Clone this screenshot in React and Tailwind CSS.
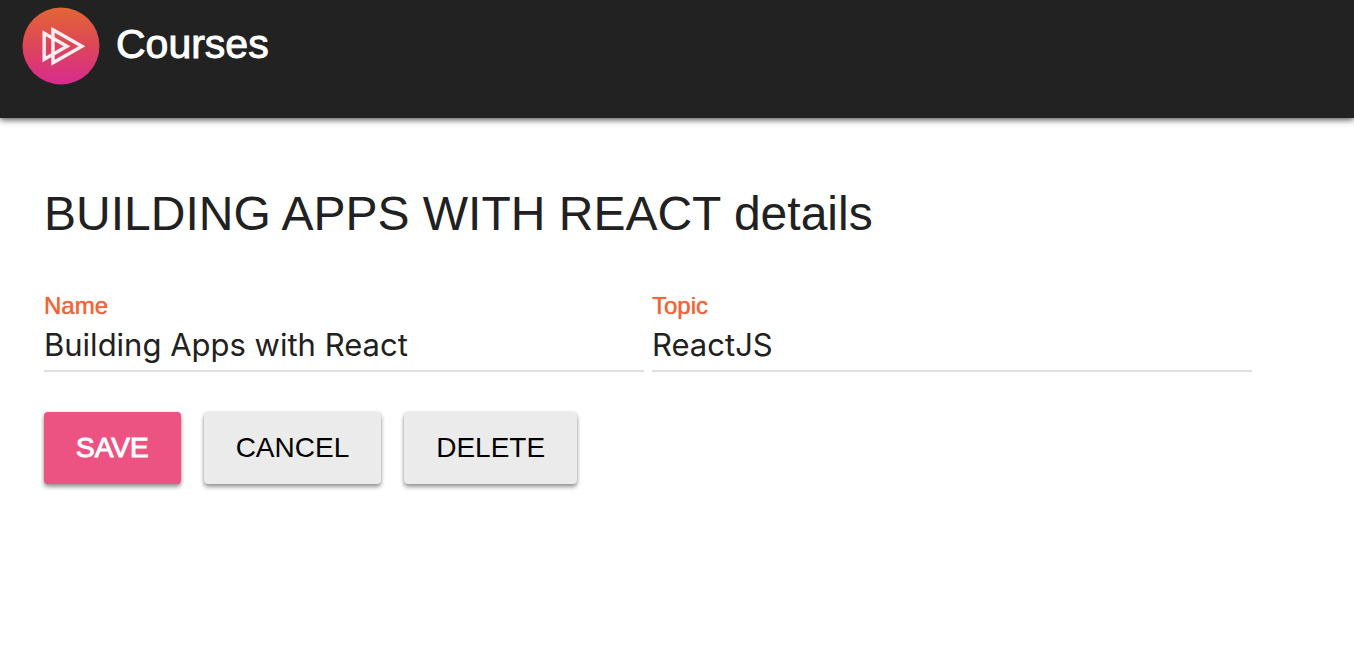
import React from 'react';

function Logo() {
  return (
    <svg viewBox="0 0 78 78" className="size-[78px] shrink-0" aria-hidden="true">
      <defs>
        <linearGradient id="logo-fill" x1="0" y1="0" x2="0" y2="1">
          <stop offset="0" stopColor="#e36635" />
          <stop offset="0.5" stopColor="#dd4558" />
          <stop offset="1" stopColor="#d82b90" />
        </linearGradient>
      </defs>
      <circle cx="39" cy="39" r="38.5" fill="url(#logo-fill)" />
      <g fill="none" stroke="#fdeef2" strokeWidth="3.4">
        <path d="M31 22.8 L60 39.3 L31 55.8 Z" />
        <path d="M22.2 26.3 L45 39.3 L22.2 52.3 Z" />
      </g>
    </svg>
  );
}

function Field({ id, label, value }) {
  return (
    <div className="w-[600px] min-w-0">
      <label htmlFor={id} className="block text-2xl leading-7 text-[#f0643a] [text-shadow:0_0_1px_#f0643a]">
        {label}
      </label>
      <input
        id={id}
        type="text"
        defaultValue={value}
        className="block h-[52px] w-full border-b-2 border-[#e0e0e0] bg-transparent pb-[2px] font-['Inter',sans-serif] text-[31px] leading-10 text-[#212121] outline-none"
      />
    </div>
  );
}

const buttonBase =
  'h-[72px] rounded px-8 text-[28px] leading-9 shadow-[0_3px_4px_rgba(0,0,0,0.4),0_0_3px_rgba(0,0,0,0.12)]';

export default function App() {
  return (
    <div className="font-['Liberation_Sans',sans-serif] text-[#212121]">
      <header className="flex h-[118px] items-start gap-4 bg-[#222222] px-[22px] pt-[7px] text-white shadow-[0_2px_6px_rgba(0,0,0,0.65)]">
        <Logo />
        <span className="pt-[13px] text-[41px] leading-12 [-webkit-text-stroke:1px]">Courses</span>
      </header>
      <main className="px-11 pt-16 pb-10">
        <h1 className="text-5xl leading-16">BUILDING APPS WITH REACT details</h1>
        <form className="pt-[46px]" onSubmit={(e) => e.preventDefault()}>
          <div className="flex gap-2">
            <Field id="name" label="Name" value="Building Apps with React" />
            <Field id="topic" label="Topic" value="ReactJS" />
          </div>
          <div className="flex gap-[23px] pt-10">
            <button type="submit" className={`${buttonBase} bg-[#ec5382] text-white [-webkit-text-stroke:1px]`}>
              SAVE
            </button>
            <button type="button" className={`${buttonBase} bg-[#ebebeb] text-black`}>
              CANCEL
            </button>
            <button type="button" className={`${buttonBase} bg-[#ebebeb] text-black`}>
              DELETE
            </button>
          </div>
        </form>
      </main>
    </div>
  );
}
